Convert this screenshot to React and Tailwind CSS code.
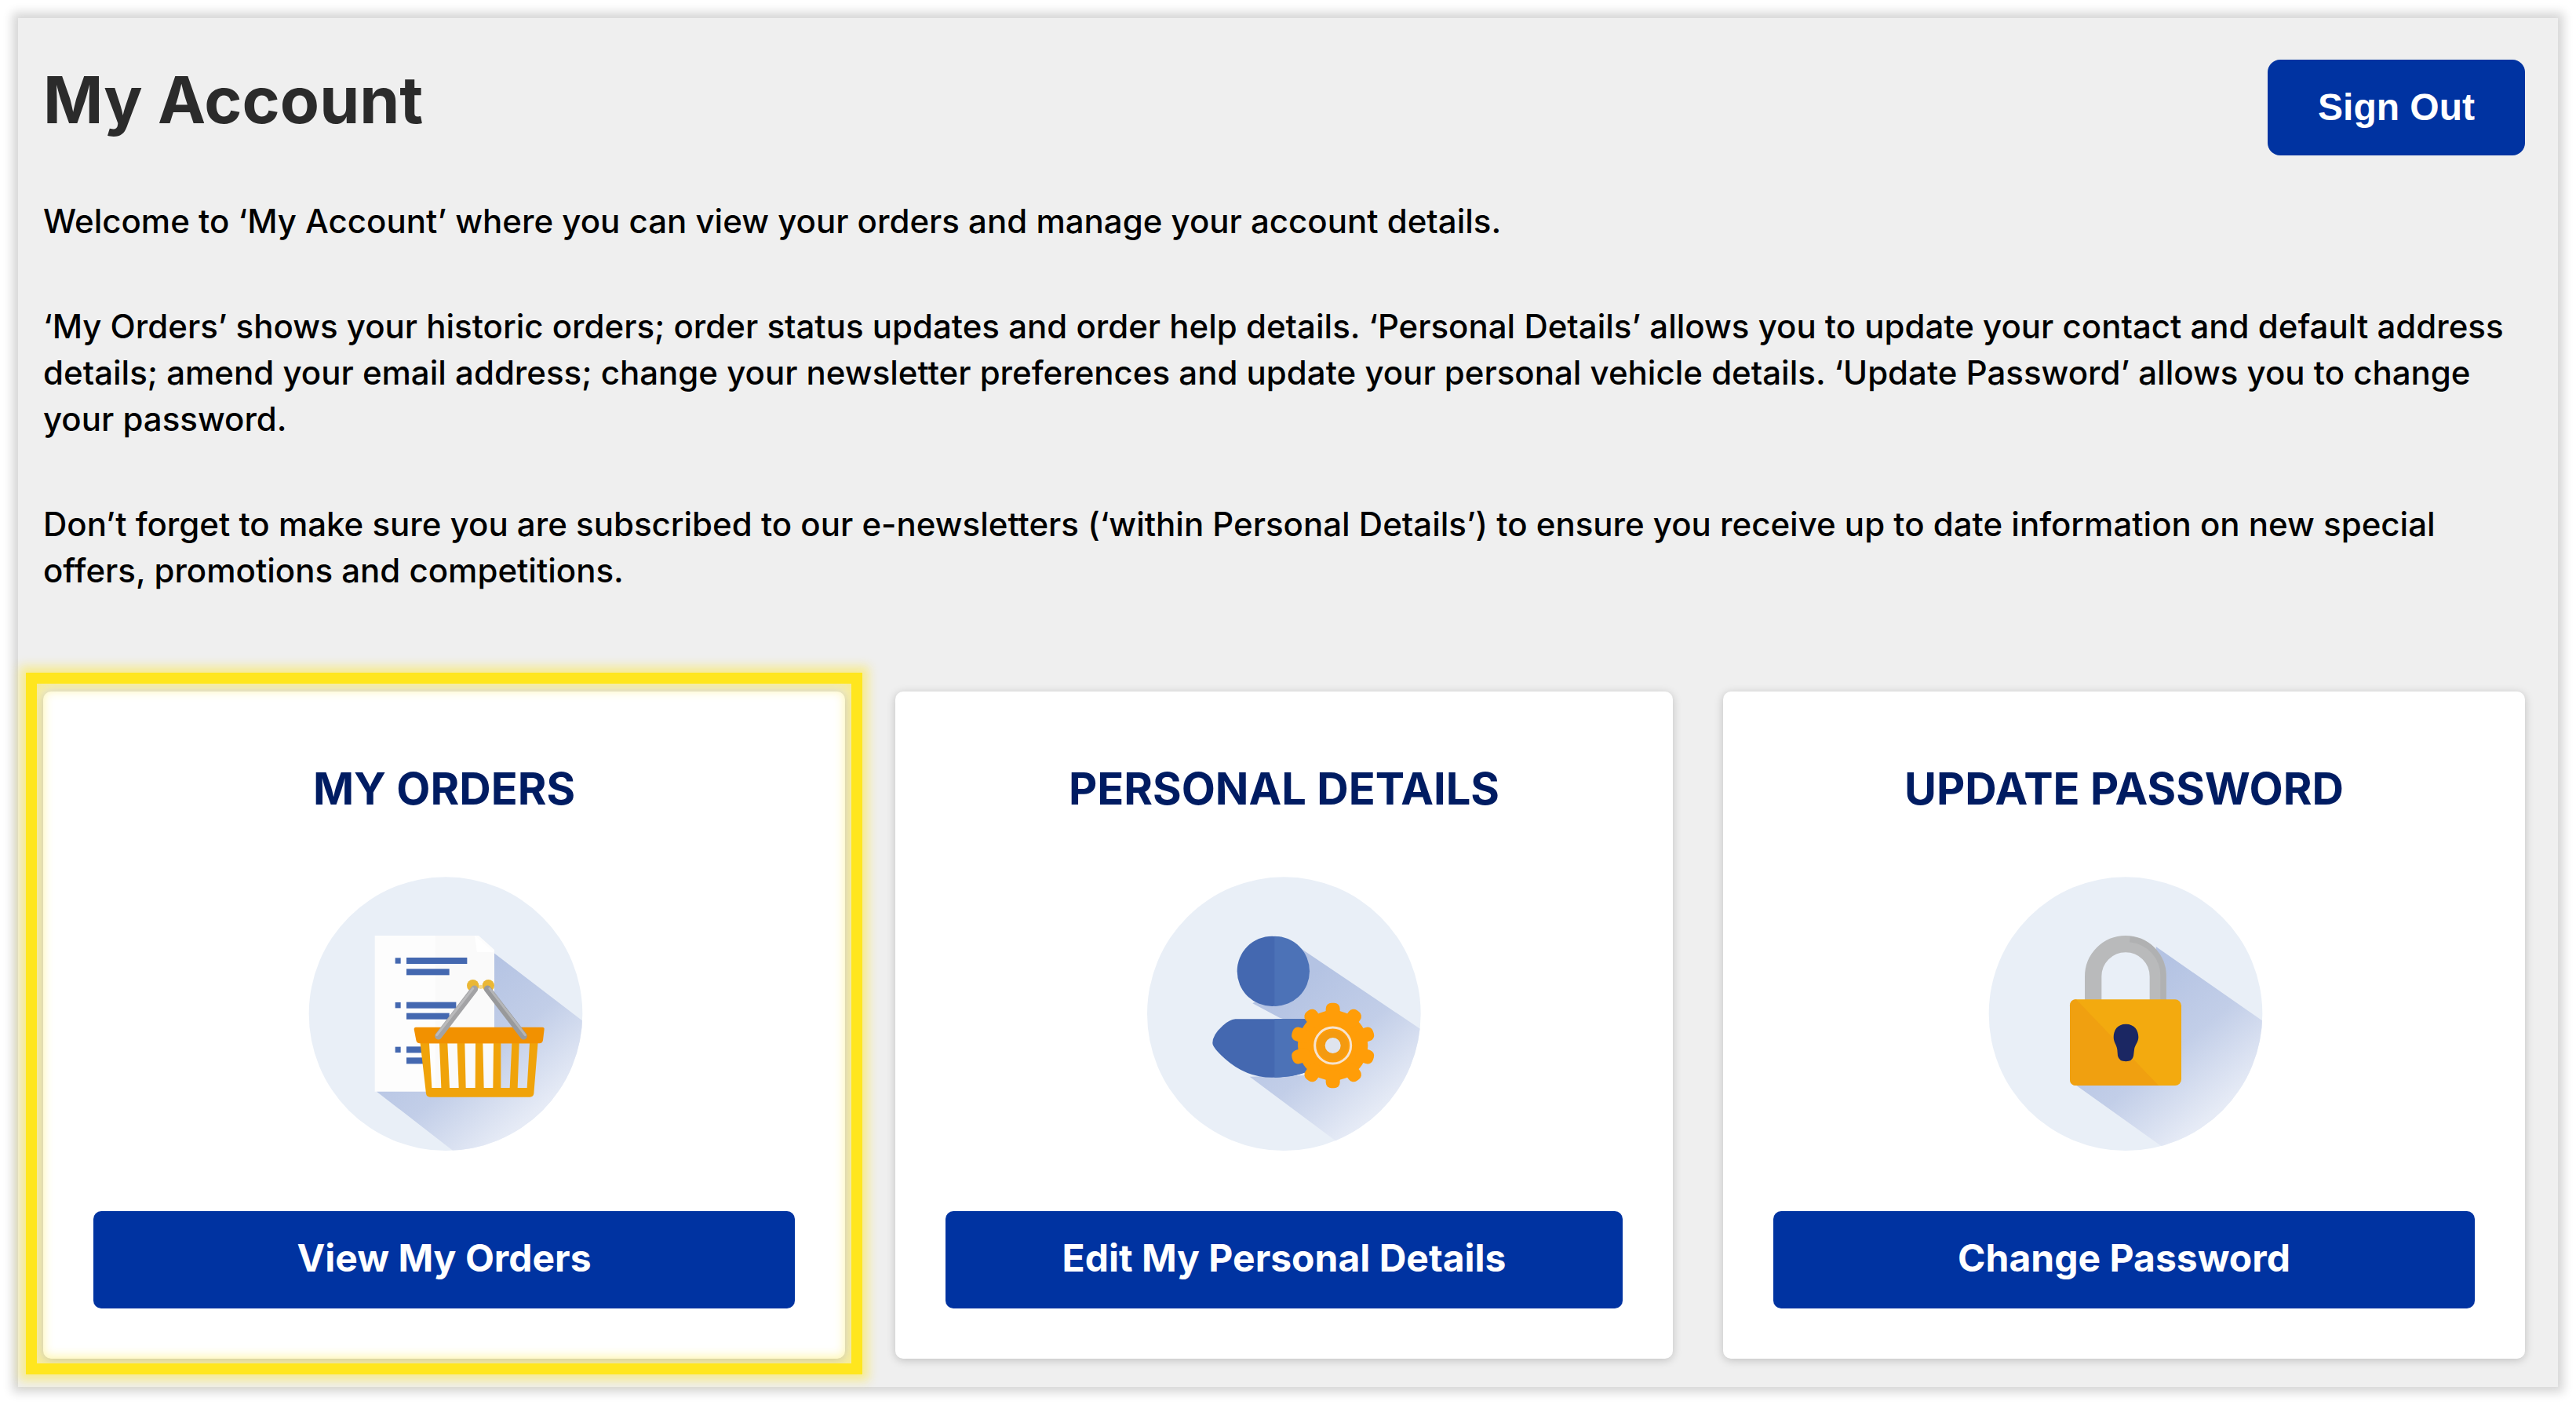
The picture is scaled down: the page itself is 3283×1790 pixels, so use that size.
import { useId } from "react";

function IconFrame ({ shadow, cx = 564, children }) {

  const id = useId()

  return (
    <svg viewBox="-12 0 1140 1140" className="h-[380px] w-[380px]" aria-hidden="true">
      <defs>
        <linearGradient id={`${id}-fade`} gradientUnits="userSpaceOnUse" x1="540" y1="520" x2="900" y2="960">
          <stop offset="0" stopColor="#b4c3e3" />
          <stop offset="0.5" stopColor="#c2cee8" />
          <stop offset="1" stopColor="#e6ebf6" />
        </linearGradient>
        <clipPath id={`${id}-disc`}>
          <circle cx={cx} cy="575" r="523" />
        </clipPath>
      </defs>
      <circle cx={cx} cy="575" r="523" fill="#e9eff7" />
      <path d={shadow} fill={`url(#${id}-fade)`} clipPath={`url(#${id}-disc)`} />
      {children}
    </svg>
  )
}

function OrdersIcon () {
  return (
    <IconFrame shadow="M300 872 L620 1120 L1140 1120 L1140 625 L1085 600 L748 342 L600 500 Z">
      <path d="M293 276 H690 L750 330 V872 H293 Z" fill="#fdfdfd" />
      <path d="M524 276 H676 L682 335 L750 338 V872 H524 Z" fill="#fafafa" />
      <path d="M676 276 L748 340 L684 338 Z" fill="#ffffff" />
      <g fill="#4468b0">
        <rect x="371" y="361" width="21" height="22" />
        <rect x="414" y="360" width="232" height="24" />
        <rect x="414" y="403" width="164" height="24" />
        <rect x="371" y="531" width="21" height="22" />
        <rect x="414" y="530" width="190" height="24" />
        <rect x="414" y="572" width="164" height="24" />
        <rect x="371" y="701" width="21" height="22" />
        <rect x="414" y="700" width="70" height="24" />
        <rect x="414" y="742" width="70" height="24" />
      </g>
      <path
        fill="#f0a30a"
        fillRule="evenodd"
        d="M466 680 H917 L901 880 Q899 893 886 893 H504 Q491 893 489 880 Z
          M501 688 H540 L547 858 H511 Z
          M571 688 H608 L614 858 H579 Z
          M637 688 H678 L677 858 H641 Z
          M706 688 H747 L745 858 H710 Z
          M775 688 H817 L809 858 H775 Z
          M845 688 H885 L875 858 H839 Z"
      />
      <path d="M450 626 H934 Q942 626 941 634 L936 676 Q934 688 922 688 H466 Q453 688 451 676 L443 634 Q443 626 450 626 Z" fill="#f29100" />
      <circle cx="668" cy="467" r="23" fill="#eab735" />
      <circle cx="727" cy="467" r="23" fill="#eab735" />
      <circle cx="698" cy="472" r="8" fill="#f7d98b" />
      <g fill="none" strokeLinecap="round">
        <path d="M674 480 L536 660" stroke="#a3a3a5" strokeWidth="27" />
        <path d="M724 480 L862 660" stroke="#98999b" strokeWidth="27" />
        <path d="M668 478 L530 656" stroke="#bababc" strokeWidth="9" />
        <path d="M732 478 L868 656" stroke="#b4b5b7" strokeWidth="9" />
      </g>
    </IconFrame>
  )
}

const gearTeeth = [0, 36, 72, 108, 144, 180, 216, 252, 288, 324]

function DetailsIcon () {
  return (
    <IconFrame cx={556} shadow="M436 535 L540 590 L700 640 L640 810 L425 815 L760 1065 L900 1120 L1140 900 L1140 675 L620 325 L500 500 Z">
      <circle cx="511" cy="412" r="134" fill="#4468b0" />
      <path d="M520 278 A134 134 0 0 1 520 546 Z" fill="#4c72b7" />
      <path d="M370 595 H680 V780 Q610 818 510 818 Q410 818 330 746 Q283 704 283 686 Q283 655 322 620 Q348 597 370 595 Z" fill="#4468b0" />
      <path d="M520 595 H680 V780 Q610 818 520 818 Z" fill="#4c72b7" />
      <g fill="#ff9d08">
        <circle cx="743" cy="696" r="134" />
        {gearTeeth.map((angle) => (
          <rect key={angle} x="716" y="533" width="54" height="70" rx="22" transform={`rotate(${angle} 743 696)`} />
        ))}
      </g>
      <circle cx="743" cy="696" r="69" fill="none" stroke="#f6e3cf" strokeWidth="9" />
      <circle cx="743" cy="696" r="44" fill="#dfe4ee" stroke="#f49a10" strokeWidth="28" />
    </IconFrame>
  )
}

function PasswordIcon () {
  return (
    <IconFrame shadow="M375 848 L700 1080 L900 1140 L1140 1100 L1140 625 L1085 600 L680 318 L690 520 Z">
      <path d="M474 520 V432 A91 91 0 0 1 656 432 V520 Z" fill="#e9eff7" />
      <path d="M440 530 V432 A124 124 0 0 1 688 432 V530" fill="none" stroke="#b9babb" strokeWidth="64" />
      <path d="M580 290 A140 140 0 0 1 708 432 V530" fill="none" stroke="#b0b1b2" strokeWidth="22" />
      <rect x="351" y="520" width="426" height="329" rx="24" fill="#f3aa0f" />
      <path d="M375 520 L690 849 H375 Q351 849 351 825 V544 Q351 520 375 520 Z" fill="#f0a010" />
      <path d="M565 614 C598 614 613 638 613 664 C613 684 599 694 597 712 L594 736 Q590 757 565 757 Q539 757 534 736 L532 712 C530 694 518 684 518 664 C518 638 532 614 565 614 Z" fill="#1b2763" />
    </IconFrame>
  )
}

function AccountCard ({ title, action, icon, highlighted }) {
  return (
    <section className="relative flex flex-col items-center rounded-[10px] bg-white px-16 pt-[88px] pb-16 shadow-[0_2px_12px_rgba(0,0,0,0.2)]">
      <h2 className="text-center text-[56px] leading-[72px] font-bold text-[#001c62]">{title}</h2>
      <div className="mt-[59px] mb-[63px]">{icon}</div>
      <button className="h-[124px] w-full rounded-[10px] bg-[#0033a1] pb-1 text-[48px] leading-[60px] font-bold text-white">
        {action}
      </button>

      {highlighted && (
        <div className="pointer-events-none absolute -inset-x-[22px] -top-6 -bottom-5 border-[14px] border-[#ffe61e] shadow-[0_0_12px_8px_rgba(255,230,30,0.45),inset_0_0_14px_8px_rgba(255,230,30,0.4)]" />
      )}
    </section>
  )
}

export default function App () {
  return (
    <main className="overflow-hidden bg-white p-[23px] font-['Inter',sans-serif]">
      <div className="bg-[#efefef] pt-[53px] pr-[42px] pb-9 pl-8 shadow-[0_0_12px_7px_#d6d6d6]">
        <header className="flex items-start justify-between">
          <h1 className="text-[82px] leading-[104px] font-bold text-[#2b2b2b]">My Account</h1>
          <button className="h-[122px] rounded-2xl bg-[#0033a1] px-16 font-['Liberation_Sans',sans-serif] text-[48px] leading-[60px] font-bold text-white">
            Sign Out
          </button>
        </header>

        <div className="mt-[54px] flex flex-col gap-[75px] pr-4 text-[42px] leading-[59px] font-medium text-black">
          <p>Welcome to ‘My Account’ where you can view your orders and manage your account details.</p>
          <p>
            ‘My Orders’ shows your historic orders; order status updates and order help details.
            ‘Personal Details’ allows you to update your contact and default address details; amend
            your email address; change your newsletter preferences and update your personal vehicle
            details. ‘Update Password’ allows you to change your password.
          </p>
          <p>
            Don’t forget to make sure you are subscribed to our e-newsletters (‘within Personal
            Details’) to ensure you receive up to date information on new special offers, promotions
            and competitions.
          </p>
        </div>

        <div className="mt-[125px] grid grid-cols-[1022fr_991fr_1022fr] gap-16">
          <AccountCard title="MY ORDERS" action="View My Orders" icon={<OrdersIcon />} highlighted />
          <AccountCard title="PERSONAL DETAILS" action="Edit My Personal Details" icon={<DetailsIcon />} />
          <AccountCard title="UPDATE PASSWORD" action="Change Password" icon={<PasswordIcon />} />
        </div>
      </div>
    </main>
  )
}
